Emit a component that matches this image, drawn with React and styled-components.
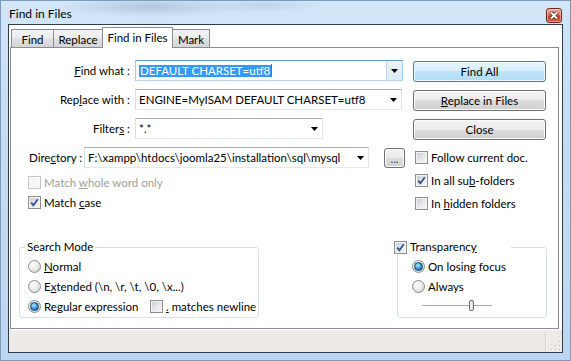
import React from 'react';
import styled, { createGlobalStyle, css } from 'styled-components';

const UI_FONT = `"Segoe UI", Lato, "Noto Sans", sans-serif`;

const GlobalStyle = createGlobalStyle`
  html, body {
    margin: 0;
    padding: 0;
  }
  body {
    width: 571px;
    height: 361px;
    overflow: hidden;
    background: #c3dbf2;
  }
  * {
    box-sizing: border-box;
  }
`;

const Window = styled.div`
  width: 571px;
  height: 361px;
  display: flex;
  flex-direction: column;
  border: 1px solid #7d9cbd;
  background:
    radial-gradient(ellipse 90px 10px at 150px 6px, rgba(120, 140, 170, 0.35), transparent),
    radial-gradient(ellipse 60px 8px at 260px 4px, rgba(140, 160, 190, 0.25), transparent),
    linear-gradient(180deg, #d3e6f8 0%, #c6ddf3 30%, #bdd6ef 100%);
  font-family: ${UI_FONT};
  font-size: 11.5px;
  color: #000;
`;

const TitleBar = styled.div`
  height: 23px;
  display: flex;
  align-items: flex-start;
  justify-content: space-between;
  padding: 5px 8px 0 8px;
  flex: none;
`;

const Title = styled.div`
  font-size: 12px;
  line-height: 16px;
  color: #000;
`;

const CloseButton = styled.div`
  width: 16px;
  height: 15px;
  margin-top: 2px;
  border: 1px solid #6e2b20;
  border-radius: 3px;
  background: linear-gradient(180deg, #eab1a3 0%, #d8705d 45%, #c5402b 55%, #d4614a 100%);
  box-shadow: inset 0 0 0 1px rgba(255, 220, 210, 0.5);
  display: flex;
  align-items: center;
  justify-content: center;
`;

const Client = styled.div`
  flex: 1;
  margin: 0 7px 7px 7px;
  border: 1px solid #2e3c4e;
  background: #fff;
  display: flex;
  flex-direction: column;
`;

const TabStrip = styled.div`
  height: 23px;
  margin-bottom: -1px;
  padding-left: 2px;
  display: flex;
  align-items: flex-end;
  position: relative;
  z-index: 1;
  flex: none;
`;

const Tab = styled.div`
  width: ${p => p.$w}px;
  height: ${p => (p.$active ? 21 : 18)}px;
  margin-right: -1px;
  margin-bottom: ${p => (p.$active ? 0 : 1)}px;
  border: 1px solid #898c95;
  border-bottom: none;
  display: flex;
  justify-content: center;
  padding-top: 2px;
  line-height: 15px;
  background: ${p =>
    p.$active
      ? '#fff'
      : 'linear-gradient(180deg, #f4f4f4 0%, #ececec 45%, #dfdfdf 55%, #d6d6d6 100%)'};
  position: relative;
  z-index: ${p => (p.$active ? 2 : 1)};
`;

const Panel = styled.div`
  height: 282px;
  margin: 0 3px 0 1px;
  border: 1px solid #898c95;
  display: flex;
  flex-direction: column;
  padding-top: 12px;
  flex: none;
`;

const TopArea = styled.div`
  display: flex;
`;

const LeftCol = styled.div`
  width: 391px;
  display: flex;
  flex-direction: column;
`;

const RightCol = styled.div`
  width: 133px;
  margin-left: 11px;
  padding-top: 1px;
  display: flex;
  flex-direction: column;
`;

const FieldRow = styled.div`
  height: 21px;
  margin-bottom: 8px;
  display: flex;
  align-items: center;
  gap: 5px;
`;

const FieldLabel = styled.div`
  width: ${p => p.$w}px;
  padding-left: ${p => p.$indent || 0}px;
  text-align: ${p => (p.$indent ? 'left' : 'right')};
  white-space: nowrap;
  flex: none;
`;

const Ul = styled.span`
  text-decoration: underline;
  text-underline-offset: 1px;
`;

const Combo = styled.div`
  width: ${p => p.$w}px;
  height: 21px;
  flex: none;
  display: flex;
  align-items: stretch;
  border: 1px solid;
  border-color: ${p =>
    p.$focused ? '#5c9fd6 #a8cbe8 #b7d5ee #a8cbe8' : '#abadb3 #e2e3ea #e3e9ef #dbdfe6'};
  background: #fff;
`;

const ComboText = styled.div`
  flex: 1;
  display: flex;
  align-items: center;
  padding-left: 3px;
  white-space: nowrap;
  overflow: hidden;
`;

const Selected = styled.span`
  background: #3399ff;
  color: #fff;
  line-height: 12px;
  padding: 0 1px;
`;

const Caret = styled.span`
  width: 1px;
  height: 13px;
  background: #c05a00;
`;

const DropButton = styled.div`
  width: 16px;
  flex: none;
  display: flex;
  align-items: center;
  justify-content: center;
  ${p =>
    p.$hot &&
    css`
      background: linear-gradient(180deg, #eaf4fc 0%, #dcebf9 100%);
      border-left: 1px solid #b7d5ee;
    `}
`;

const Browse = styled.div`
  width: 21px;
  height: 20px;
  margin-left: 10px;
  border: 1px solid #707070;
  border-radius: 3px;
  background: linear-gradient(180deg, #f2f2f2 0%, #ebebeb 50%, #dddddd 50%, #cfcfcf 100%);
  box-shadow: inset 0 0 0 1px #fcfcfc;
  display: flex;
  align-items: flex-end;
  justify-content: center;
  padding-bottom: 3px;
  font-size: 11px;
  line-height: 11px;
  color: #1a3d8f;
  flex: none;
`;

const Button = styled.div`
  height: 21px;
  margin-bottom: 8px;
  border: 1px solid ${p => (p.$default ? '#3c7fb1' : '#707070')};
  border-radius: 3px;
  background: ${p =>
    p.$default
      ? 'linear-gradient(180deg, #e5f4fc 0%, #d6eefb 50%, #bfe4f9 50%, #afdcf6 100%)'
      : 'linear-gradient(180deg, #f2f2f2 0%, #ebebeb 50%, #dddddd 50%, #cfcfcf 100%)'};
  box-shadow: inset 0 0 0 1px ${p => (p.$default ? '#f4fbff' : '#fcfcfc')};
  display: flex;
  align-items: center;
  justify-content: center;
  line-height: 15px;
`;

const CheckList = styled.div`
  display: flex;
  flex-direction: column;
  gap: ${p => p.$gap}px;
  margin-left: ${p => p.$indent}px;
  margin-top: ${p => p.$top || 0}px;
`;

const Option = styled.label`
  height: 13px;
  display: flex;
  align-items: center;
  gap: 3px;
  white-space: nowrap;
  width: ${p => (p.$w ? `${p.$w}px` : 'auto')};
  color: ${p => (p.$disabled ? '#a0a0a0' : '#000')};
  flex: none;
`;

const Box = styled.span`
  width: 13px;
  height: 13px;
  flex: none;
  border: 1px solid ${p => (p.$disabled ? '#c5c6c7' : '#8e8f8f')};
  background: ${p =>
    p.$disabled
      ? '#f4f4f4'
      : 'linear-gradient(135deg, #c4c8cd 0%, #e4e6e8 50%, #f9f9f9 100%)'};
  box-shadow: inset 0 0 0 1px ${p => (p.$disabled ? '#fafafa' : '#f3f3f3')};
  display: flex;
  align-items: center;
  justify-content: center;
`;

const Round = styled.span`
  width: 13px;
  height: 13px;
  flex: none;
  border-radius: 50%;
  border: 1px solid #8a8d90;
  background: radial-gradient(circle at 35% 30%, #ffffff 0%, #ececec 45%, #c9c9c9 100%);
  display: flex;
  align-items: center;
  justify-content: center;
  ${p =>
    p.$on &&
    css`
      &::after {
        content: '';
        width: 7px;
        height: 7px;
        border-radius: 50%;
        border: 1px solid #163f63;
        background: radial-gradient(circle at 40% 35%, #b8e6ff 0%, #3a9ad8 50%, #155585 100%);
      }
    `}
`;

const BottomArea = styled.div`
  margin-top: auto;
  padding: 0 11px 10px 8px;
  display: flex;
  justify-content: space-between;
`;

const Group = styled.fieldset`
  width: ${p => p.$w}px;
  height: 78px;
  margin: 0;
  padding: 6px 0 0 ${p => p.$pad}px;
  border: 1px solid #d5dfe5;
  border-radius: 3px;
  min-width: 0;
`;

const Legend = styled.legend`
  padding: 0 2px;
  margin-left: ${p => p.$shift}px;
  line-height: 14px;
  height: 14px;
  width: ${p => (p.$w ? `${p.$w}px` : 'auto')};
  display: flex;
  align-items: center;
  gap: 3px;
`;

const Slider = styled.div`
  width: 70px;
  height: 11px;
  margin-left: 10px;
  display: flex;
  align-items: center;
  position: relative;
`;

const Track = styled.div`
  width: 100%;
  height: 2px;
  border-top: 1px solid #a8a8a8;
  border-bottom: 1px solid #ffffff;
  background: #e6e6e6;
`;

const Thumb = styled.div`
  position: absolute;
  left: 47px;
  top: 0;
  width: 5px;
  height: 11px;
  border: 1px solid #6e6e6e;
  border-radius: 2px;
  background: linear-gradient(90deg, #f6f6f6, #dcdcdc);
`;

const StatusBar = styled.div`
  flex: 1;
  margin-top: 1px;
  background: #edeae8;
  display: flex;
  justify-content: flex-end;
  align-items: stretch;
`;

const StatusPart = styled.div`
  width: 17px;
  margin: 2px 0 0 0;
  border-left: 1px solid #d6d2cf;
  box-shadow: inset 1px 0 0 #f8f6f5;
  display: flex;
  align-items: flex-end;
  justify-content: flex-end;
  padding: 0 1px 1px 0;
`;

const Check = ({ on, disabled, w, children }) => (
  <Option $disabled={disabled} $w={w}>
    <Box $disabled={disabled}>
      {on && (
        <svg width="11" height="11" viewBox="0 0 11 11">
          <path d="M2.2 5.6 L4.4 8.2 L8.8 2.3" fill="none" stroke="#34518f" strokeWidth="1.8" />
        </svg>
      )}
    </Box>
    <span>{children}</span>
  </Option>
);

const Radio = ({ on, w, children }) => (
  <Option $w={w}>
    <Round $on={on} />
    <span>{children}</span>
  </Option>
);

const Arrow = () => (
  <svg width="7" height="4" viewBox="0 0 7 4">
    <polygon points="0,0 7,0 3.5,4" fill="#000" />
  </svg>
);

const Grip = () => (
  <svg width="11" height="11" viewBox="0 0 11 11">
    {[[9, 1], [9, 5], [5, 5], [9, 9], [5, 9], [1, 9]].map(([x, y]) => (
      <g key={`${x}-${y}`}>
        <rect x={x} y={y} width="1" height="1" fill="#b8b4b0" />
        <rect x={x + 1} y={y + 1} width="1" height="1" fill="#fff" />
      </g>
    ))}
  </svg>
);

export default function App() {
  return (
    <>
      <GlobalStyle />
      <Window>
        <TitleBar>
          <Title>Find in Files</Title>
          <CloseButton>
            <svg width="10" height="9" viewBox="0 0 10 9">
              <path d="M2 1.5 L8 7.5 M8 1.5 L2 7.5" stroke="#5a2016" strokeWidth="3.2" />
              <path d="M2 1.5 L8 7.5 M8 1.5 L2 7.5" stroke="#fff" strokeWidth="1.8" />
            </svg>
          </CloseButton>
        </TitleBar>
        <Client>
          <TabStrip>
            <Tab $w={43}>Find</Tab>
            <Tab $w={50}>Replace</Tab>
            <Tab $w={71} $active>Find in Files</Tab>
            <Tab $w={38}>Mark</Tab>
          </TabStrip>
          <Panel>
            <TopArea>
              <LeftCol>
                <FieldRow>
                  <FieldLabel $w={119}><Ul>F</Ul>ind what :</FieldLabel>
                  <Combo $w={268} $focused>
                    <ComboText>
                      <Selected>DEFAULT CHARSET=utf8</Selected>
                      <Caret />
                    </ComboText>
                    <DropButton $hot><Arrow /></DropButton>
                  </Combo>
                </FieldRow>
                <FieldRow>
                  <FieldLabel $w={119}>Rep<Ul>l</Ul>ace with :</FieldLabel>
                  <Combo $w={267}>
                    <ComboText>ENGINE=MyISAM DEFAULT CHARSET=utf8</ComboText>
                    <DropButton><Arrow /></DropButton>
                  </Combo>
                </FieldRow>
                <FieldRow>
                  <FieldLabel $w={119}>Filter<Ul>s</Ul> :</FieldLabel>
                  <Combo $w={188}>
                    <ComboText>*.*</ComboText>
                    <DropButton><Arrow /></DropButton>
                  </Combo>
                </FieldRow>
                <FieldRow>
                  <FieldLabel $w={68} $indent={18}>Dire<Ul>c</Ul>tory :</FieldLabel>
                  <Combo $w={285}>
                    <ComboText>F:\xampp\htdocs\joomla25\installation\sql\mysql</ComboText>
                    <DropButton><Arrow /></DropButton>
                  </Combo>
                  <Browse>...</Browse>
                </FieldRow>
                <CheckList $gap={7} $indent={17}>
                  <Check disabled>Match <Ul>w</Ul>hole word only</Check>
                  <Check on>Match <Ul>c</Ul>ase</Check>
                </CheckList>
              </LeftCol>
              <RightCol>
                <Button $default>Find All</Button>
                <Button><span><Ul>R</Ul>eplace in Files</span></Button>
                <Button>Close</Button>
                <CheckList $gap={10} $indent={2} $top={3}>
                  <Check>Follow current doc.</Check>
                  <Check on>In all su<Ul>b</Ul>-folders</Check>
                  <Check>In <Ul>h</Ul>idden folders</Check>
                </CheckList>
              </RightCol>
            </TopArea>
            <BottomArea>
              <Group $w={240} $pad={8}>
                <Legend $shift={-3}>Search Mode</Legend>
                <CheckList $gap={7} $indent={0}>
                  <Radio><Ul>N</Ul>ormal</Radio>
                  <Radio>E<Ul>x</Ul>tended (\n, \r, \t, \0, \x...)</Radio>
                  <Option as="div">
                    <Radio on w={119}>Re<Ul>g</Ul>ular expression</Radio>
                    <Check><Ul>.</Ul> matches newline</Check>
                  </Option>
                </CheckList>
              </Group>
              <Group $w={150} $pad={14}>
                <Legend $shift={-20} $w={119}>
                  <Box>
                    <svg width="11" height="11" viewBox="0 0 11 11">
                      <path d="M2.2 5.6 L4.4 8.2 L8.8 2.3" fill="none" stroke="#34518f" strokeWidth="1.8" />
                    </svg>
                  </Box>
                  <span>Transparenc<Ul>y</Ul></span>
                </Legend>
                <CheckList $gap={7} $indent={0}>
                  <Radio on>On losing focus</Radio>
                  <Radio>Always</Radio>
                  <Slider>
                    <Track />
                    <Thumb />
                  </Slider>
                </CheckList>
              </Group>
            </BottomArea>
          </Panel>
          <StatusBar>
            <StatusPart>
              <Grip />
            </StatusPart>
          </StatusBar>
        </Client>
      </Window>
    </>
  );
}
